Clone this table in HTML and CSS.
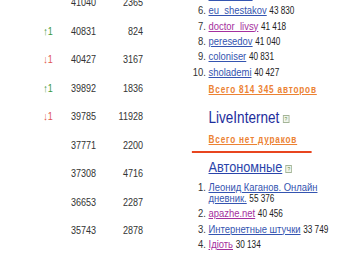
FILE: index.html
```html
<!DOCTYPE html>
<html lang="ru">
<head>
<meta charset="utf-8">
<link rel="stylesheet" href="styles.css">
</head>
<body>
<div class="page">
  <div class="stats">
    <div class="row"><span class="chg"></span><span class="n1">41040</span><span class="n2">2365</span></div>
    <div class="row"><span class="chg up">↑1</span><span class="n1">40831</span><span class="n2">824</span></div>
    <div class="row"><span class="chg down">↓1</span><span class="n1">40427</span><span class="n2">3167</span></div>
    <div class="row"><span class="chg up">↑1</span><span class="n1">39892</span><span class="n2">1836</span></div>
    <div class="row"><span class="chg down">↓1</span><span class="n1">39785</span><span class="n2">11928</span></div>
    <div class="row"><span class="chg"></span><span class="n1">37771</span><span class="n2">2200</span></div>
    <div class="row"><span class="chg"></span><span class="n1">37308</span><span class="n2">4716</span></div>
    <div class="row"><span class="chg"></span><span class="n1">36653</span><span class="n2">2287</span></div>
    <div class="row"><span class="chg"></span><span class="n1">35743</span><span class="n2">2878</span></div>
  </div>
  <div class="side">
    <ol class="top" start="5">
      <li><a class="lnk" href="#">doctor_kto</a> <span class="cnt">44 210</span></li>
      <li><a class="lnk" href="#">eu_shestakov</a> <span class="cnt">43 830</span></li>
      <li><a class="lnk visited" href="#">doctor_livsy</a> <span class="cnt">41 418</span></li>
      <li><a class="lnk" href="#">peresedov</a> <span class="cnt">41 040</span></li>
      <li><a class="lnk" href="#">coloniser</a> <span class="cnt">40 831</span></li>
      <li><a class="lnk" href="#">sholademi</a> <span class="cnt">40 427</span></li>
    </ol>
    <a class="total first" href="#">Всего 814 345 авторов</a>
    <div class="head li-head"><a class="title plain" href="#">LiveInternet</a><span class="help">?</span></div>
    <a class="total" href="#">Всего нет дураков</a>
    <div class="sep"></div>
    <div class="head auto-head"><a class="title auto-title" href="#">Автономные</a><span class="help">?</span></div>
    <ol class="auto">
      <li><a class="lnk" href="#">Леонид Каганов. Онлайн дневник.</a> <span class="cnt">55 376</span></li>
      <li><a class="lnk visited" href="#">apazhe.net</a> <span class="cnt">40 456</span></li>
      <li><a class="lnk" href="#">Интернетные штучки</a> <span class="cnt">33 749</span></li>
      <li><a class="lnk visited" href="#">Ідіоть</a> <span class="cnt">30 134</span></li>
    </ol>
  </div>
</div>
</body>
</html>
```

FILE: styles.css
```css
html, body {
  margin: 0;
  padding: 0;
  background: #ffffff;
  overflow: hidden;
}

body {
  font-family: "Liberation Sans", Arial, sans-serif;
  color: #333333;
}

/* The reference is a horizontally condensed rendering: reproduce it with one scale */
.page {
  display: flex;
  width: 414px;
  transform: scaleX(0.82);
  transform-origin: 0 0;
}

.stats {
  width: 190px;
  flex: none;
  margin-top: -12px;
  padding-left: 40px;
  box-sizing: border-box;
}

.row {
  display: grid;
  grid-template-columns: 37px 60px 37.4px;
  height: 28.5px;
  align-items: center;
  font-size: 11px;
  color: #333333;
}

.chg {
  text-align: center;
  font-size: 11px;
}

.up { color: #3c9a3c; }
.down { color: #e0554f; }

.n1 { padding-left: 9.6px; }
.n2 { text-align: right; }

.side {
  flex: 1;
  padding-left: 64.3px;
  min-width: 0;
}

ol {
  margin: 0;
  padding: 0;
  list-style: decimal outside;
}

ol li {
  font-size: 11.5px;
  line-height: 11px;
  margin-bottom: 4.4px;
  color: #333333;
}

ol.top {
  margin-top: -10.2px;
}

.lnk {
  font-size: 11.5px;
  line-height: 11px;
  color: #3454b0;
  text-decoration: underline;
}

.lnk.visited {
  color: #a52f9e;
}

.cnt {
  font-size: 10px;
  line-height: 10px;
  color: #222222;
}

.total {
  display: block;
  font-weight: bold;
  font-size: 10px;
  letter-spacing: 1px;
  line-height: 12px;
  color: #ec8233;
  text-decoration: underline;
}

.total.first {
  margin-top: 5.8px;
}

.head {
  display: flex;
  align-items: center;
  line-height: 18px;
}

.li-head {
  margin-top: 12.5px;
  margin-bottom: 8px;
}

.auto-head {
  margin-top: 5.7px;
  margin-bottom: 5.5px;
}

.title {
  font-size: 16.5px;
  color: #2a44aa;
  text-decoration: underline;
}

.title.plain {
  color: #1d2d9c;
  text-decoration: none;
}

.title.auto-title {
  font-size: 15.5px;
}

.help {
  display: inline-block;
  width: 6px;
  height: 6px;
  margin-left: 4px;
  margin-top: 3px;
  border: 1px solid #a3b497;
  background: #f1f5ec;
  color: #5f8f44;
  font-size: 6px;
  line-height: 6px;
  text-align: center;
}

.sep {
  height: 2px;
  width: 146px;
  margin-left: -20.3px;
  margin-top: 4.5px;
  background: #e8451f;
}
```
